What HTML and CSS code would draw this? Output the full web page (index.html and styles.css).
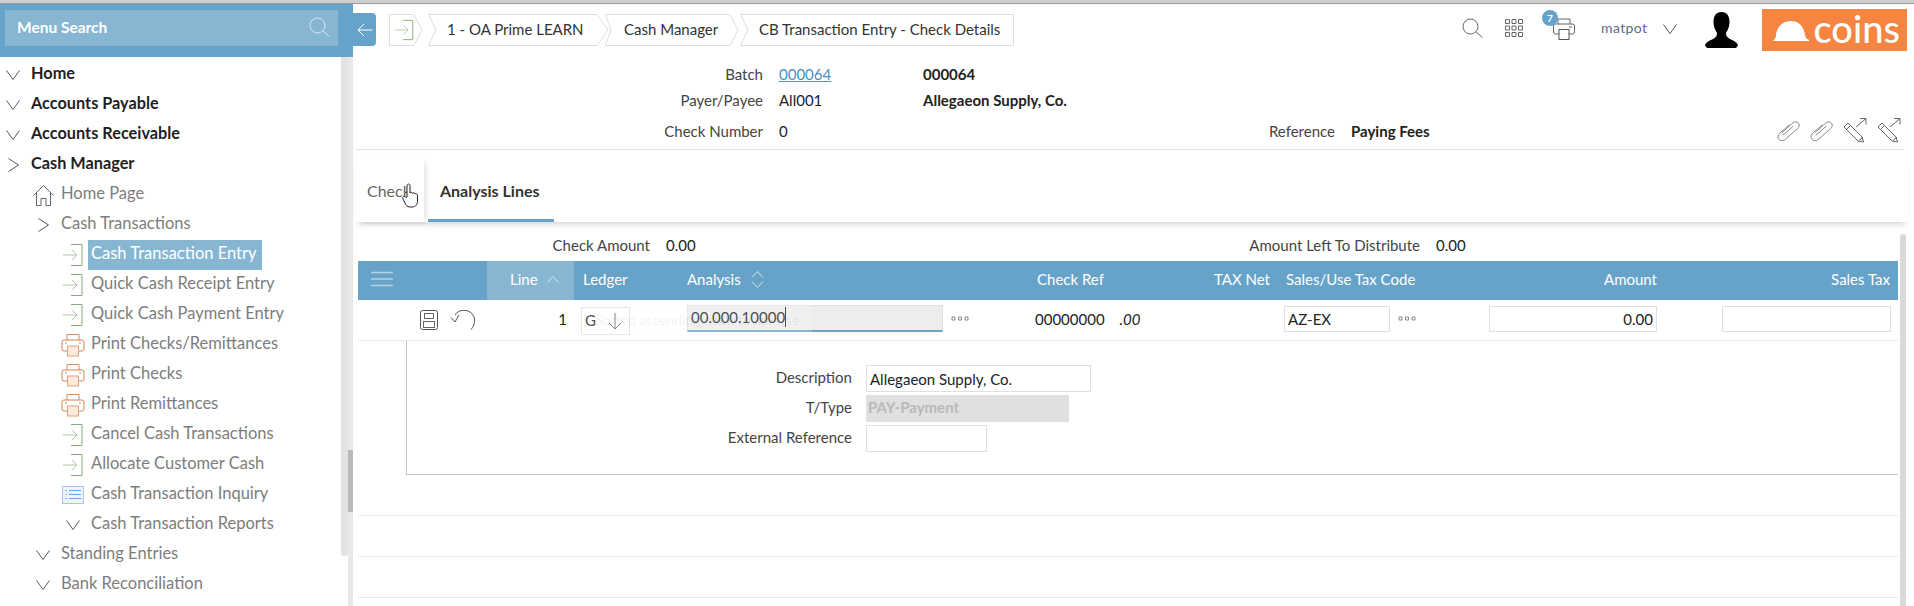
FILE: index.html
```html
<!DOCTYPE html>
<html lang="en">
<head>
    <meta charset="UTF-8">
    <title>CB Transaction Entry - Check Details</title>
    <link rel="stylesheet" href="styles.css">
</head>
<body>
    <svg class="sprite" aria-hidden="true">
        <symbol id="i-enter" viewBox="0 0 20 24">
            <path d="M8 1.5H19V22.5H8" fill="none" stroke="#8bab78"/>
            <path d="M0 12H14M9 7L14 12L9 17" fill="none" stroke="#b0c9a0"/>
        </symbol>
        <symbol id="i-print" viewBox="0 0 24 24">
            <path d="M6 7V1.5H18V7" fill="#fff" stroke="#d98f5f"/>
            <rect x="1" y="7" width="22" height="11" rx="2" fill="#fff" stroke="#d9824a"/>
            <path d="M4 10H6M18 10H20" stroke="#d9824a"/>
            <rect x="6.5" y="13" width="11" height="10" fill="#fbeadd" stroke="#e0a27a"/>
        </symbol>
        <symbol id="i-list" viewBox="0 0 22 18">
            <rect x="0.5" y="0.5" width="21" height="17" fill="#eef4fb" stroke="#a9c6e6"/>
            <path d="M3.5 4.5H5M7 4.5H19M3.5 8.5H5M7 8.5H19M3.5 12.5H5M7 12.5H19" stroke="#6fa3da"/>
        </symbol>
        <symbol id="i-down" viewBox="0 0 14 10">
            <path d="M0.5 0.5L7 9.5L13.5 0.5" fill="none" stroke="#555"/>
        </symbol>
        <symbol id="i-right" viewBox="0 0 11 14">
            <path d="M0.5 0.5L10.5 7L0.5 13.5" fill="none" stroke="#555"/>
        </symbol>
        <symbol id="i-search" viewBox="0 0 21 20">
            <circle cx="8.5" cy="8.5" r="7.5" fill="none" stroke="currentColor"/>
            <path d="M14 14L20.5 19.5" stroke="currentColor"/>
        </symbol>
        <symbol id="i-clip" viewBox="0 0 24 22">
            <path d="M5 13L16 3C18 1 21 1 22.5 3C24 5 23 7 21.500 8.500L9 19.500C7 21.500 3.500 21.500 2 19.500C0.500 17.500 1 15 3 13L13 4.500M6 15.500L17 6" fill="none" stroke="#777" stroke-width="0.9"/>
        </symbol>
        <symbol id="i-pencil" viewBox="0 0 24 25">
            <path d="M1 9L5 5L19 19L20.500 24L15 23Z" fill="#fff" stroke="#666"/>
            <path d="M3.500 11.500L7.500 7.500M16 22.500L20 19" stroke="#666"/>
            <path d="M13 9L23 0.500M17 0.500H23V6.500" fill="none" stroke="#666"/>
        </symbol>
        <symbol id="i-dots" viewBox="0 0 18 5">
            <path d="M1 1H4V4H1ZM7.500 1H10.500V4H7.500ZM14 1H17V4H14Z" fill="none" stroke="#888"/>
        </symbol>
    </svg>

    <div class="top-strip"></div>

    <div class="app">
        <aside class="sidebar">
            <div class="menu-head">
                <div class="menu-search">
                    <span>Menu Search</span>
                    <svg class="menu-search-icon"><use href="#i-search"/></svg>
                </div>
            </div>
            <div class="menu-body">
                <ul class="nav">
                    <li class="nav-row lvl0"><span class="slot"><svg class="chev-d"><use href="#i-down"/></svg></span><span class="nav-label">Home</span></li>
                    <li class="nav-row lvl0"><span class="slot"><svg class="chev-d"><use href="#i-down"/></svg></span><span class="nav-label">Accounts Payable</span></li>
                    <li class="nav-row lvl0"><span class="slot"><svg class="chev-d"><use href="#i-down"/></svg></span><span class="nav-label">Accounts Receivable</span></li>
                    <li class="nav-row lvl0"><span class="slot"><svg class="chev-r"><use href="#i-right"/></svg></span><span class="nav-label">Cash Manager</span></li>
                    <li class="nav-row lvl1"><span class="slot">
                        <svg class="ico-home" viewBox="0 0 21 21"><path d="M0.500 10.500L10.500 0.500L20.500 10.500M3.500 8V20.500H8V13.500H13V20.500H17.500V8" fill="none" stroke="#666"/></svg>
                    </span><span class="nav-label">Home Page</span></li>
                    <li class="nav-row lvl1"><span class="slot"><svg class="chev-r"><use href="#i-right"/></svg></span><span class="nav-label">Cash Transactions</span></li>
                    <li class="nav-row lvl2"><span class="slot"><svg class="ico-enter"><use href="#i-enter"/></svg></span><span class="nav-label selected">Cash Transaction Entry</span></li>
                    <li class="nav-row lvl2"><span class="slot"><svg class="ico-enter"><use href="#i-enter"/></svg></span><span class="nav-label">Quick Cash Receipt Entry</span></li>
                    <li class="nav-row lvl2"><span class="slot"><svg class="ico-enter"><use href="#i-enter"/></svg></span><span class="nav-label">Quick Cash Payment Entry</span></li>
                    <li class="nav-row lvl2"><span class="slot"><svg class="ico-print"><use href="#i-print"/></svg></span><span class="nav-label">Print Checks/Remittances</span></li>
                    <li class="nav-row lvl2"><span class="slot"><svg class="ico-print"><use href="#i-print"/></svg></span><span class="nav-label">Print Checks</span></li>
                    <li class="nav-row lvl2"><span class="slot"><svg class="ico-print"><use href="#i-print"/></svg></span><span class="nav-label">Print Remittances</span></li>
                    <li class="nav-row lvl2"><span class="slot"><svg class="ico-enter"><use href="#i-enter"/></svg></span><span class="nav-label">Cancel Cash Transactions</span></li>
                    <li class="nav-row lvl2"><span class="slot"><svg class="ico-enter"><use href="#i-enter"/></svg></span><span class="nav-label">Allocate Customer Cash</span></li>
                    <li class="nav-row lvl2"><span class="slot"><svg class="ico-list"><use href="#i-list"/></svg></span><span class="nav-label">Cash Transaction Inquiry</span></li>
                    <li class="nav-row lvl2"><span class="slot"><svg class="chev-d"><use href="#i-down"/></svg></span><span class="nav-label">Cash Transaction Reports</span></li>
                    <li class="nav-row lvl1"><span class="slot"><svg class="chev-d"><use href="#i-down"/></svg></span><span class="nav-label">Standing Entries</span></li>
                    <li class="nav-row lvl1"><span class="slot"><svg class="chev-d"><use href="#i-down"/></svg></span><span class="nav-label">Bank Reconciliation</span></li>
                </ul>
                <div class="nav-thumb"></div>
                <div class="nav-track"><div class="nav-track-thumb"></div></div>
            </div>
        </aside>

        <main class="main">
            <header class="topbar">
                <div class="menu-toggle">
                    <svg class="menu-toggle-icon" viewBox="0 0 16 14"><path d="M15.500 7H1M7 1L1 7L7 13" fill="none" stroke="#fff"/></svg>
                </div>
                <nav class="crumbs">
                    <div class="crumb crumb-icon">
                        <svg class="crumb-shape" viewBox="0 0 34 32" preserveAspectRatio="none"><path d="M0.500 0.500H25L33 16L25 31.500H0.500Z" fill="#fff" stroke="#ddd"/></svg>
                        <svg class="crumb-enter"><use href="#i-enter"/></svg>
                    </div>
                    <div class="crumb crumb-a">
                        <svg class="crumb-shape" viewBox="0 0 181 32" preserveAspectRatio="none"><path d="M0.500 0.500H169L180 16L169 31.500H0.500L8 16Z" fill="#fff" stroke="#ddd"/></svg>
                        <span>1 - OA Prime LEARN</span>
                    </div>
                    <div class="crumb crumb-b">
                        <svg class="crumb-shape" viewBox="0 0 134 32" preserveAspectRatio="none"><path d="M0.500 0.500H125L133 16L125 31.500H0.500L6 16Z" fill="#fff" stroke="#ddd"/></svg>
                        <span>Cash Manager</span>
                    </div>
                    <div class="crumb crumb-c">
                        <svg class="crumb-shape" viewBox="0 0 274 32" preserveAspectRatio="none"><path d="M0.500 0.500H273.500V31.500H0.500L8 16Z" fill="#fff" stroke="#ddd"/></svg>
                        <span>CB Transaction Entry - Check Details</span>
                    </div>
                </nav>
                <div class="top-tools">
                    <svg class="tool-search"><use href="#i-search"/></svg>
                    <svg class="tool-grid" viewBox="0 0 18 19">
                        <path d="M0.500 0.500h4v4h-4zM7 0.500h4v4h-4zM13.500 0.500h4v4h-4zM0.500 7h4v4h-4zM7 7h4v4h-4zM13.500 7h4v4h-4zM0.500 13.500h4v4h-4zM7 13.500h4v4h-4zM13.500 13.500h4v4h-4z" fill="none" stroke="#666"/>
                    </svg>
                    <div class="tool-print">
                        <svg class="tool-print-icon" viewBox="0 0 22 22">
                            <path d="M5 6V1H17V6" fill="#fff" stroke="#666"/>
                            <rect x="0.500" y="6" width="21" height="10" rx="2" fill="#fff" stroke="#666"/>
                            <path d="M16 9H19" stroke="#666"/>
                            <rect x="6" y="11.500" width="10" height="10" fill="#fff" stroke="#555"/>
                        </svg>
                        <span class="badge">7</span>
                    </div>
                    <span class="user-name">matpot</span>
                    <svg class="user-chev"><use href="#i-down"/></svg>
                    <svg class="user-pic" viewBox="0 0 33 36">
                        <path d="M16.500 0C11 0 8.500 4 8.500 10C8.500 14 10 18 12 21C12 24 11 25 8 27C4 29 1 30 0 33.500L2 36H31L33 33.500C32 30 29 29 25 27C22 25 21 24 21 21C23 18 24.500 14 24.500 10C24.500 4 22 0 16.500 0Z" fill="#000"/>
                    </svg>
                    <div class="logo">
                        <svg class="logo-hat" viewBox="0 0 36 20"><path d="M0 20C1 18 3 17 3 15C3 6 10 0 18 0C26 0 31 6 32 14L33 17L36 19V20Z" fill="#fff"/></svg>
                        <span class="logo-text">coins</span>
                    </div>
                </div>
            </header>

            <section class="batch-form">
                <div class="form-row">
                    <span class="form-label">Batch</span>
                    <a class="form-link">000064</a>
                    <span class="form-value-2">000064</span>
                </div>
                <div class="form-row">
                    <span class="form-label">Payer/Payee</span>
                    <span class="form-value">All001</span>
                    <span class="form-value-2">Allegaeon Supply, Co.</span>
                </div>
                <div class="form-row form-row-last">
                    <span class="form-label">Check Number</span>
                    <span class="form-value">0</span>
                    <span class="ref-label">Reference</span>
                    <span class="ref-value">Paying Fees</span>
                    <div class="form-icons">
                        <svg class="ico-clip"><use href="#i-clip"/></svg>
                        <svg class="ico-clip"><use href="#i-clip"/></svg>
                        <svg class="ico-pencil"><use href="#i-pencil"/></svg>
                        <svg class="ico-pencil"><use href="#i-pencil"/></svg>
                    </div>
                </div>
            </section>

            <section class="tabs">
                <div class="tab tab-check">
                    Check
                    <svg class="hand" viewBox="0 0 17 25">
                        <path d="M5 14V2.500C5 0.500 8 0.500 8 2.500V10C8 9 10.500 9 10.500 10.500C10.500 9.500 13 9.500 13 11C13 10.500 15.500 10.500 15.500 12.500V18C15.500 21 14 24 10 24H8C5 24 4 22 3 20L0.800 15.500C0 13.500 3 12.500 4 14.500Z" fill="#fff" stroke="#222"/>
                    </svg>
                </div>
                <div class="tab tab-active">Analysis Lines</div>
            </section>

            <section class="lines">
                <div class="lines-body">
                    <div class="amounts">
                        <span class="amt-label amt-label-a">Check Amount</span>
                        <span class="amt-value">0.00</span>
                        <span class="amt-label amt-label-b">Amount Left To Distribute</span>
                        <span class="amt-value">0.00</span>
                    </div>

                    <div class="grid-row grid-head">
                        <div class="cell-menu">
                            <svg class="ico-menu" viewBox="0 0 22 16"><path d="M0 1.500H22M0 8H22M0 14.500H22" stroke="#b5d2e5" stroke-width="1.500"/></svg>
                        </div>
                        <div class="cell-sorted">Line
                            <svg class="ico-caret" viewBox="0 0 12 7"><path d="M0.500 6.500L6 0.500L11.500 6.500" fill="none" stroke="#d5e6f0"/></svg>
                        </div>
                        <div class="cell-ledger">Ledger</div>
                        <div class="cell-analysis">Analysis
                            <svg class="ico-sort" viewBox="0 0 13 17"><path d="M1 6.500L6.500 0.500L12 6.500M1 10.500L6.500 16.500L12 10.500" fill="none" stroke="#d5e6f0"/></svg>
                        </div>
                        <div class="cell-ref">Check Ref</div>
                        <div class="cell-right">TAX Net</div>
                        <div class="cell-code">Sales/Use Tax Code</div>
                        <div class="cell-right">Amount</div>
                        <div class="cell-right">Sales Tax</div>
                    </div>

                    <div class="grid-row grid-line">
                        <div class="row-actions">
                            <svg class="ico-save" viewBox="0 0 18 20">
                                <rect x="0.500" y="0.500" width="17" height="19" rx="2" fill="#fff" stroke="#555"/>
                                <rect x="4.500" y="3.500" width="9" height="5" fill="none" stroke="#666"/>
                                <rect x="3.500" y="11.500" width="11" height="6" fill="none" stroke="#666"/>
                            </svg>
                            <svg class="ico-undo" viewBox="0 0 26 20">
                                <path d="M5 5C8 0 15 -1 20 2C26 6 26 14 21 19.500M1 7.500L5 12L9 5" fill="none" stroke="#555"/>
                            </svg>
                        </div>
                        <div class="line-no">1</div>
                        <div class="ledger-cell">
                            <div class="ledger-box">G
                                <svg class="ico-arrow" viewBox="0 0 14 17"><path d="M7 0V16M1 10L7 16L13 10" fill="none" stroke="#666"/></svg>
                            </div>
                            <div class="ghost-tip">Sorted ascending, click to reverse</div>
                        </div>
                        <div class="analysis-cell">
                            <div class="analysis-input"><span class="caret">00.000.10000</span></div>
                            <svg class="ico-dots"><use href="#i-dots"/></svg>
                        </div>
                        <div class="ref-cell">00000000 <em>.00</em></div>
                        <div></div>
                        <div class="code-cell">
                            <input class="field field-code" value="AZ-EX">
                            <svg class="ico-dots"><use href="#i-dots"/></svg>
                        </div>
                        <div class="amount-cell"><input class="field field-amount" value="0.00"></div>
                        <div class="amount-cell"><input class="field field-tax" value=""></div>
                    </div>

                    <div class="detail">
                        <div class="detail-panel">
                            <div class="detail-row">
                                <label class="detail-label">Description</label>
                                <input class="field field-desc" value="Allegaeon Supply, Co.">
                            </div>
                            <div class="detail-row">
                                <label class="detail-label">T/Type</label>
                                <div class="field-disabled">PAY-Payment</div>
                            </div>
                            <div class="detail-row">
                                <label class="detail-label">External Reference</label>
                                <input class="field field-ext" value="">
                            </div>
                        </div>
                    </div>

                    <div class="empty-row"></div>
                    <div class="empty-row"></div>
                    <div class="empty-row"></div>
                </div>
                <div class="lines-scroll"></div>
            </section>
        </main>
    </div>
</body>
</html>
```

FILE: styles.css
```css
* {
    box-sizing: border-box;
}

html, body {
    height: 606px;
    margin: 0;
    overflow: hidden;
}

body {
    font-family: Lato, "Open Sans", sans-serif;
    font-size: 15px;
    color: #222;
    background-color: #ffffff;
}

.sprite {
    display: block;
    width: 0;
    height: 0;
}

.top-strip {
    height: 4px;
    background-color: #cfcfcf;
    border-bottom: 1px solid #9c9c9c;
}

.app {
    display: flex;
    height: 602px;
}

/* left menu */
.sidebar {
    width: 353px;
    flex: none;
    display: flex;
    flex-direction: column;
}

.menu-head {
    height: 53px;
    padding: 6px 15px 11px 5px;
    background-color: #67a3c9;
}

.menu-search {
    height: 36px;
    padding: 0 8px 3px 12px;
    display: flex;
    align-items: center;
    justify-content: space-between;
    background-color: #87b6d3;
    color: #ffffff;
    font-weight: 700;
    font-size: 15.500px;
}

.menu-search-icon {
    width: 21px;
    height: 20px;
    color: #d8e8f2;
}

.menu-body {
    flex: 1;
    display: flex;
    min-height: 0;
}

.nav {
    list-style: none;
    width: 341px;
    margin: 0;
    padding: 3px 0 0;
}

.nav-row {
    display: flex;
    align-items: center;
    height: 30px;
    color: #7d7d7d;
    font-size: 16.500px;
}

.lvl0 {
    color: #1f1f1f;
    font-weight: 700;
    font-size: 16.300px;
}

.lvl1 {
    padding-left: 30px;
}

.lvl2 {
    padding-left: 60px;
}

.slot {
    width: 26px;
    flex: none;
    display: flex;
    align-items: center;
    justify-content: center;
}

.nav-label {
    margin-left: 2px;
    padding: 0 5px 4px 3px;
    line-height: 26px;
    white-space: nowrap;
}

.selected {
    background-color: #87b6d3;
    color: #ffffff;
}

.chev-d {
    width: 14px;
    height: 10px;
}

.chev-r {
    width: 11px;
    height: 14px;
}

.ico-home {
    width: 21px;
    height: 21px;
}

.ico-enter {
    width: 20px;
    height: 24px;
}

.ico-print {
    width: 24px;
    height: 24px;
}

.ico-list {
    width: 22px;
    height: 18px;
}

.nav-thumb {
    width: 7px;
    height: 499px;
    background-color: #e2e2e2;
    border-radius: 0 0 3px 3px;
}

.nav-track {
    width: 5px;
    padding-top: 393px;
    background-color: #e8e8e8;
}

.nav-track-thumb {
    height: 62px;
    background-color: #b9b9b9;
}

/* main area */
.main {
    flex: 1;
    min-width: 0;
    position: relative;
}

.topbar {
    height: 56px;
    display: flex;
    align-items: flex-start;
    padding-top: 9px;
}

.menu-toggle {
    width: 23px;
    height: 33px;
    background-color: #67a3c9;
    border-radius: 0 4px 4px 0;
    display: flex;
    align-items: center;
    justify-content: center;
}

.menu-toggle-icon {
    width: 16px;
    height: 14px;
}

.crumbs {
    display: flex;
    margin: 1px 0 0 13px;
    height: 32px;
}

.crumb {
    position: relative;
    height: 32px;
    display: flex;
    align-items: center;
    font-size: 15px;
    color: #333;
}

.crumb span {
    position: relative;
    white-space: nowrap;
    top: -1px;
}

.crumb-shape {
    position: absolute;
    top: 0;
    left: 0;
    width: 100%;
    height: 100%;
}

.crumb-icon {
    width: 34px;
    padding-left: 6px;
    margin-right: 5px;
}

.crumb-enter {
    position: relative;
    width: 19px;
    height: 22px;
}

.crumb-a {
    width: 181px;
    padding-left: 19px;
    margin-right: -4px;
}

.crumb-b {
    width: 134px;
    padding-left: 19px;
    margin-right: 1px;
}

.crumb-c {
    width: 274px;
    padding-left: 19px;
}

.top-tools {
    margin: -4px 0 0 448px;
    display: flex;
    align-items: flex-start;
}

.tool-search {
    width: 21px;
    height: 20px;
    margin-top: 9px;
    color: #666;
}

.tool-grid {
    width: 18px;
    height: 19px;
    margin: 10px 0 0 22px;
}

.tool-print {
    position: relative;
    width: 22px;
    height: 22px;
    margin: 9px 0 0 30px;
}

.tool-print-icon {
    width: 22px;
    height: 22px;
}

.badge {
    position: absolute;
    left: -11px;
    top: -8px;
    width: 16px;
    height: 16px;
    border-radius: 50%;
    background-color: #67a3c9;
    color: #ffffff;
    font-size: 10px;
    font-weight: 700;
    line-height: 16px;
    text-align: center;
}

.user-name {
    margin: 10px 0 0 26px;
    font-size: 14px;
    color: #5d6d85;
    letter-spacing: 0.400px;
}

.user-chev {
    width: 14px;
    height: 10px;
    margin: 15px 0 0 16px;
}

.user-pic {
    width: 33px;
    height: 36px;
    margin: 3px 0 0 28px;
}

.logo {
    width: 145px;
    height: 42px;
    margin-left: 24px;
    background-color: #f58540;
    display: flex;
    align-items: center;
    padding-left: 11px;
    color: #ffffff;
}

.logo-hat {
    width: 36px;
    height: 20px;
    margin-top: 1px;
}

.logo-text {
    margin-left: 4px;
    font-size: 38px;
    line-height: 42px;
    font-weight: 500;
    margin-top: -5px;
}

/* batch header */
.batch-form {
    padding-top: 1px;
    margin: 0 10px 0 2px;
    border-bottom: 1px solid #e4e4e4;
    height: 90px;
}

.form-row {
    display: flex;
    align-items: center;
    height: 26px;
}

.form-row-last {
    height: 35px;
}

.form-label {
    width: 408px;
    text-align: right;
    color: #444;
}

.form-value,
.form-link {
    width: 144px;
    margin-left: 16px;
    color: #222;
}

.form-link {
    color: #4d8fbd;
    text-decoration: underline;
}

.form-value-2 {
    font-weight: 700;
    color: #222;
}

.ref-label {
    width: 412px;
    text-align: right;
    color: #444;
}

.ref-value {
    margin-left: 16px;
    font-weight: 700;
}

.form-icons {
    margin-left: auto;
    display: flex;
    align-items: center;
    gap: 10px;
    padding-right: 3px;
}

.ico-clip {
    width: 23px;
    height: 22px;
}

.ico-pencil {
    width: 24px;
    height: 25px;
}

/* tabs */
.tabs {
    height: 64px;
    margin: 8px 6px 0 2px;
    display: flex;
    gap: 4px;
    box-shadow: 0 5px 6px -3px rgba(0, 0, 0, 0.18);
}

.tab {
    padding: 23px 12px 0;
    font-size: 16px;
}

.tab-check {
    position: relative;
    width: 69px;
    padding-left: 12px;
    color: #666;
    box-shadow: 4px 2px 6px -3px rgba(0, 0, 0, 0.15);
}

.tab-active {
    width: 126px;
    font-weight: 700;
    color: #333;
    border-bottom: 3px solid #67a3c9;
}

.hand {
    position: absolute;
    left: 47px;
    top: 25px;
    width: 17px;
    height: 25px;
}

/* analysis lines */
.lines {
    display: flex;
    padding-left: 5px;
}

.lines-body {
    width: 1540px;
}

.lines-scroll {
    width: 6px;
    height: 380px;
    margin: 12px 0 0 2px;
    background-color: #d9d9d9;
    border-radius: 3px;
}

.amounts {
    height: 39px;
    padding-top: 7px;
    display: flex;
    align-items: center;
}

.amt-label {
    text-align: right;
    color: #444;
}

.amt-label-a {
    width: 292px;
}

.amt-label-b {
    width: 754px;
}

.amt-value {
    margin-left: 16px;
    width: 0;
    color: #222;
}

.grid-row {
    display: grid;
    grid-template-columns: 129px 87px 113px 343px 120px 128px 202px 185px 233px;
    align-items: center;
}

.grid-head {
    height: 39px;
    background-color: #67a3c9;
    color: #ffffff;
}

.grid-head > div {
    display: flex;
    align-items: center;
    height: 100%;
    padding-bottom: 3px;
}

.cell-menu {
    padding-left: 13px;
}

.ico-menu {
    width: 22px;
    height: 16px;
}

.grid-head .cell-sorted {
    background-color: #87b6d3;
    padding-left: 23px;
}

.ico-caret {
    width: 12px;
    height: 7px;
    margin-left: 9px;
}

.cell-ledger {
    padding-left: 9px;
}

.ico-sort {
    width: 13px;
    height: 17px;
    margin-left: 10px;
}

.cell-ref {
    padding-left: 7px;
}

.grid-head .cell-right {
    justify-content: flex-end;
    padding-right: 8px;
}

.cell-code {
    padding-left: 8px;
}

.grid-line {
    height: 41px;
    padding-bottom: 3px;
    border-bottom: 1px solid #e6e6e6;
    position: relative;
}

.row-actions {
    display: flex;
    align-items: center;
    padding-left: 62px;
    padding-top: 3px;
    gap: 12px;
}

.ico-save {
    width: 18px;
    height: 20px;
}

.ico-undo {
    width: 26px;
    height: 20px;
}

.line-no {
    text-align: right;
    padding-right: 7px;
}

.ledger-cell {
    position: relative;
    height: 100%;
    padding: 7px 0 0 7px;
}

.ledger-box {
    width: 49px;
    height: 28px;
    padding-left: 3px;
    padding-bottom: 2px;
    border: 1px solid #e0e0e0;
    display: flex;
    align-items: center;
    justify-content: space-between;
    padding-right: 7px;
}

.ico-arrow {
    width: 14px;
    height: 17px;
    margin-top: 2px;
}

/* fading tooltip that sits over the row */
.ghost-tip {
    position: absolute;
    z-index: 5;
    left: 7px;
    top: 5px;
    width: 231px;
    height: 30px;
    padding-left: 14px;
    line-height: 30px;
    white-space: nowrap;
    font-size: 14px;
    color: rgba(0, 0, 0, 0.07);
    background-color: rgba(255, 255, 255, 0.2);
    box-shadow: 0 0 2px rgba(0, 0, 0, 0.03);
}

.analysis-cell {
    display: flex;
    align-items: center;
    height: 100%;
}

.analysis-input {
    width: 256px;
    height: 27px;
    padding-left: 3px;
    line-height: 23px;
    background-color: #ededed;
    border: 1px solid #e0e0e0;
    border-bottom: 2px solid #67a3c9;
    color: #222;
}

.caret {
    border-right: 1px solid #222;
    display: inline-block;
    line-height: 20px;
}

.ico-dots {
    width: 18px;
    height: 5px;
    margin-left: 8px;
    flex: none;
}

.ref-cell {
    padding-left: 5px;
    white-space: nowrap;
    word-spacing: 11px;
}

.code-cell {
    display: flex;
    align-items: center;
    padding-left: 6px;
}

.field {
    font-family: inherit;
    font-size: 15px;
    color: #222;
    height: 26px;
    padding: 0 3px;
    border: 1px solid #e0e0e0;
    border-radius: 0;
    background-color: #ffffff;
    outline: none;
}

.field-code {
    width: 106px;
}

.field-amount {
    width: 168px;
    margin-left: 9px;
    text-align: right;
}

.field-tax {
    width: 169px;
    margin-left: 57px;
}

.detail {
    padding-left: 48px;
}

.detail-panel {
    height: 134px;
    padding-top: 24px;
    border-left: 1px solid #c4c4c4;
    border-bottom: 1px solid #c4c4c4;
}

.detail-row {
    display: flex;
    align-items: center;
    height: 27px;
    margin-bottom: 3px;
}

.detail-label {
    width: 445px;
    margin: -3px 14px 0 0;
    text-align: right;
    color: #444;
}

.field-desc {
    width: 225px;
    height: 27px;
}

.field-disabled {
    width: 203px;
    height: 27px;
    padding-left: 2px;
    line-height: 25px;
    background-color: #e0e0e0;
    color: #b9b9b9;
    font-weight: 700;
}

.field-ext {
    width: 121px;
    height: 27px;
}

.empty-row {
    height: 41px;
    border-bottom: 1px solid #e6e6e6;
}
```
